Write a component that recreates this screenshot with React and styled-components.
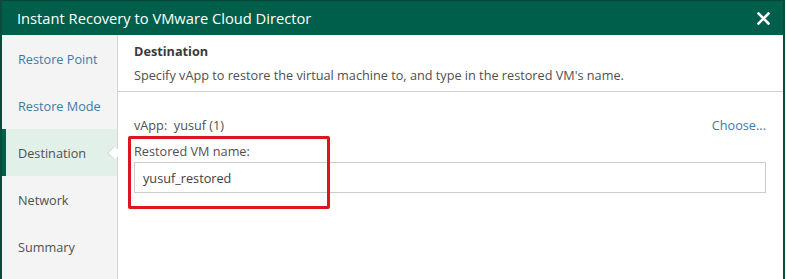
import React from "react";
import styled, { createGlobalStyle } from "styled-components";

const GlobalStyle = createGlobalStyle`
  html, body {
    margin: 0;
    padding: 0;
    background: #ffffff;
  }
  body {
    font-family: "Open Sans", "Noto Sans", sans-serif;
    color: #444444;
  }
`;

const Window = styled.div`
  width: 785px;
  height: 279px;
  box-sizing: border-box;
  border-left: 2px solid #0b4a3c;
  border-right: 2px solid #0b4a3c;
  display: flex;
  flex-direction: column;
  overflow: hidden;
`;

const TitleBar = styled.div`
  height: 35px;
  flex: none;
  background: #005f4b;
  border-top: 1px solid #0a4538;
  box-sizing: border-box;
  display: flex;
  align-items: center;
  justify-content: space-between;
  padding: 0 12px 0 15px;
  color: #ffffff;
  font-size: 14.7px;
`;

const CloseButton = styled.span`
  display: flex;
  align-items: center;
  justify-content: center;
  width: 16px;
  height: 16px;
`;

const Body = styled.div`
  flex: 1;
  display: flex;
`;

const Sidebar = styled.div`
  width: 115px;
  flex: none;
  background: #f4f4f4;
  border-right: 1px solid #d6d6d6;
  display: flex;
  flex-direction: column;
`;

const NavItem = styled.div`
  position: relative;
  height: 47px;
  display: flex;
  align-items: center;
  padding-left: ${(p) => (p.$active ? "12px" : "16px")};
  border-left: ${(p) => (p.$active ? "4px solid #005f4b" : "none")};
  background: ${(p) => (p.$active ? "#e1f0e9" : "transparent")};
  color: ${(p) => (p.$link ? "#3b7ba8" : "#505050")};
  font-size: 12.7px;
`;

const Notch = styled.span`
  position: absolute;
  right: -2px;
  top: 50%;
  width: 9px;
  height: 9px;
  background: #ffffff;
  border-left: 1px solid #d6d6d6;
  border-bottom: 1px solid #d6d6d6;
  transform: translateY(-50%) rotate(45deg);
`;

const Main = styled.div`
  flex: 1;
  display: flex;
  flex-direction: column;
`;

const Header = styled.div`
  height: 57px;
  box-sizing: border-box;
  border-bottom: 1px solid #cfcfcf;
  padding: 7px 16px 0 16px;
  display: flex;
  flex-direction: column;
  gap: 6px;
`;

const HeaderTitle = styled.div`
  font-weight: 700;
  font-size: 12.7px;
  color: #3a3a3a;
  line-height: 18px;
`;

const HeaderText = styled.div`
  font-size: 12.7px;
  color: #505050;
  line-height: 18px;
`;

const Content = styled.div`
  padding: 24px 17px 0 16px;
  display: flex;
  flex-direction: column;
`;

const VappRow = styled.div`
  display: flex;
  justify-content: space-between;
  align-items: center;
  font-size: 12.7px;
  line-height: 18px;
  color: #505050;
  white-space: pre;
`;

const Link = styled.span`
  color: #3b7ba8;
`;

const Field = styled.div`
  position: relative;
  margin-top: 8px;
  display: flex;
  flex-direction: column;
  gap: 2px;
`;

const Label = styled.div`
  font-size: 12.7px;
  line-height: 18px;
  color: #505050;
`;

const Input = styled.div`
  height: 31px;
  box-sizing: border-box;
  border: 1px solid #cccccc;
  display: flex;
  align-items: center;
  padding-left: 8px;
  font-size: 12.7px;
  color: #404040;
`;

const Highlight = styled.div`
  position: absolute;
  left: -6px;
  top: -6px;
  width: 202px;
  height: 73px;
  box-sizing: border-box;
  border: 3px solid #e0141e;
  border-radius: 2px;
`;

const steps = [
  { name: "Restore Point", link: true },
  { name: "Restore Mode", link: true },
  { name: "Destination", active: true },
  { name: "Network" },
  { name: "Summary" },
];

const App = () => {
  return (
    <>
      <GlobalStyle />
      <Window>
        <TitleBar>
          <span>Instant Recovery to VMware Cloud Director</span>
          <CloseButton>
            <svg width="13" height="13" viewBox="0 0 13 13">
              <path d="M1.5 1.5 L11.5 11.5 M11.5 1.5 L1.5 11.5" stroke="#ffffff" strokeWidth="2.6" strokeLinecap="square" />
            </svg>
          </CloseButton>
        </TitleBar>
        <Body>
          <Sidebar>
            {steps.map((s) => (
              <NavItem key={s.name} $active={s.active} $link={s.link}>
                {s.name}
                {s.active && <Notch />}
              </NavItem>
            ))}
          </Sidebar>
          <Main>
            <Header>
              <HeaderTitle>Destination</HeaderTitle>
              <HeaderText>
                Specify vApp to restore the virtual machine to, and type in the restored VM's name.
              </HeaderText>
            </Header>
            <Content>
              <VappRow>
                <span>vApp:  yusuf (1)</span>
                <Link>Choose...</Link>
              </VappRow>
              <Field>
                <Label>Restored VM name:</Label>
                <Input>yusuf_restored</Input>
                <Highlight />
              </Field>
            </Content>
          </Main>
        </Body>
      </Window>
    </>
  );
};

export default App;
